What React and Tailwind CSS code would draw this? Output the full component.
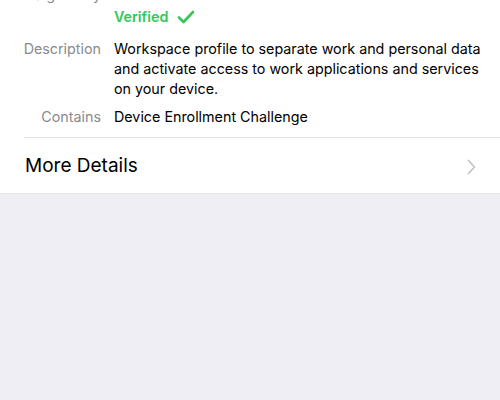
export default function App() {
  const rows = [
    { label: 'Signed by', value: null },
    {
      label: 'Description',
      value: 'Workspace profile to separate work and personal data and activate access to work applications and services on your device.',
    },
    { label: 'Contains', value: 'Device Enrollment Challenge' },
  ];

  return (
    <div className="h-[400px] w-[500px] overflow-hidden bg-[#efeef4] font-['Inter',sans-serif]">
      <div className="bg-white">
        <div className="-mt-[19px] pb-[6px] pl-[19px] pr-[10px]">
          {rows.map((row, i) => (
            <div
              key={row.label}
              className={`flex gap-[13px] py-[4px] text-[14.3px] leading-[20px] ${i === 0 ? 'mb-[4px]' : ''}`}
            >
              <div className="w-[82px] shrink-0 text-right text-[#8a8a8e]">{row.label}</div>
              <div className="text-black">
                {row.value ?? (
                  <>
                    <div>Microsoft Intune</div>
                    <div className="flex items-center gap-[9px] pt-[2px] font-semibold text-[#34c759]">
                      Verified
                      <svg width="18" height="14" viewBox="0 0 18 14" fill="none">
                        <path d="M2 7.5 L6.5 12 L16 2" stroke="#34c759" strokeWidth="2.6" strokeLinecap="round" strokeLinejoin="round" />
                      </svg>
                    </div>
                  </>
                )}
              </div>
            </div>
          ))}
        </div>
        <div className="ml-[24px] h-px bg-[#e2e2e6]" />
        <div className="flex h-[55px] items-center justify-between pl-[25px] pr-[24px] pt-[2px]">
          <span className="text-[19px] text-black">More Details</span>
          <svg width="9" height="16" viewBox="0 0 9 16" fill="none">
            <path d="M1.5 1.5 L7.5 8 L1.5 14.5" stroke="#c4c4c7" strokeWidth="1.8" strokeLinecap="round" strokeLinejoin="round" />
          </svg>
        </div>
        <div className="h-px bg-[#e4e3e8]" />
      </div>
    </div>
  );
}
